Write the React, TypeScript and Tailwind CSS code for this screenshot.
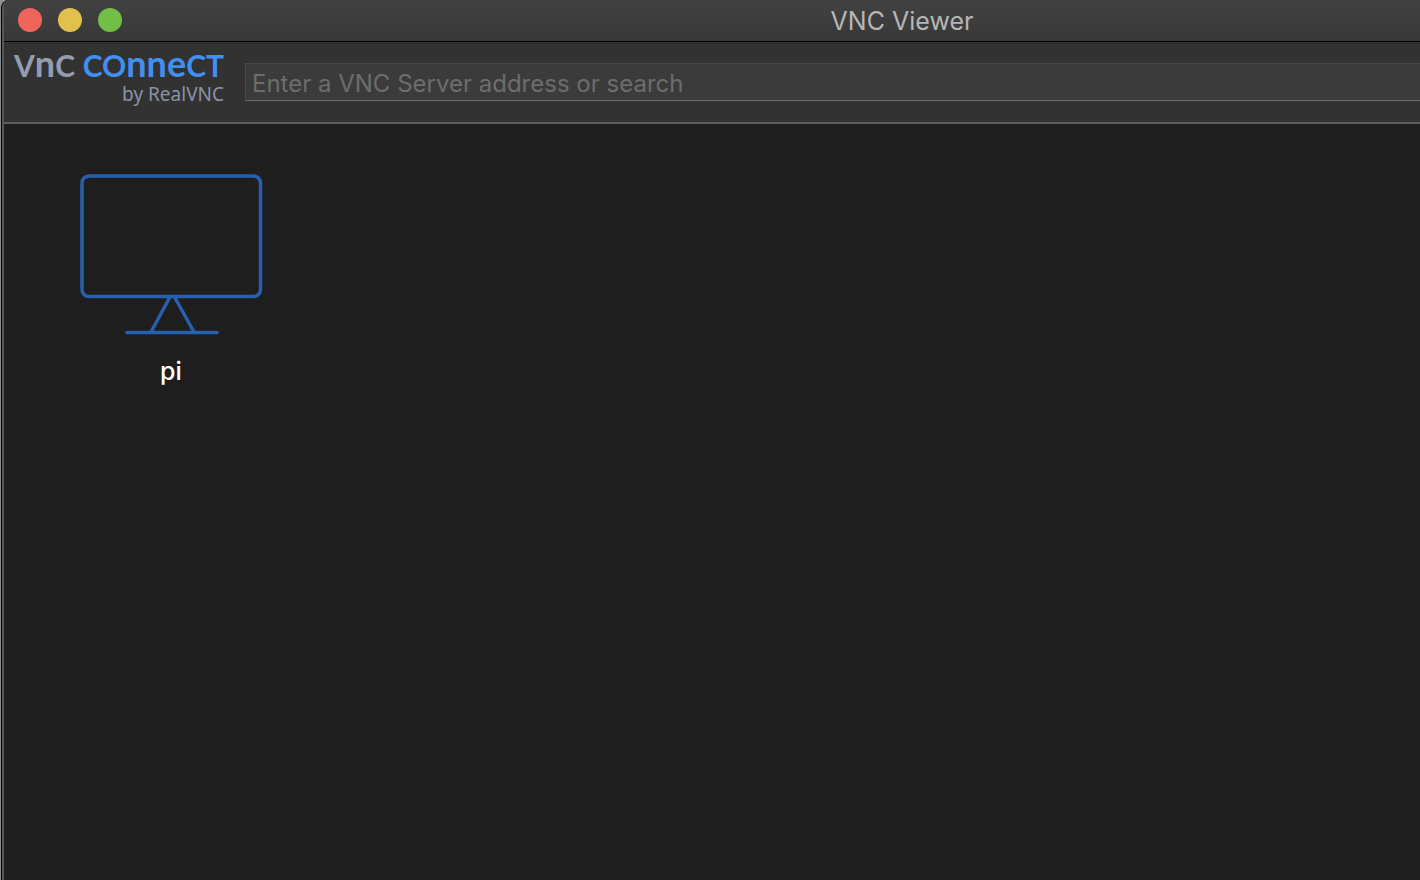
import type { ReactNode } from "react";

const windowButtons = [
  { label: "Close", color: "bg-[#ee665b]" },
  { label: "Minimize", color: "bg-[#e2c04d]" },
  { label: "Zoom", color: "bg-[#72bf48]" },
];

const computers = [{ id: 1, name: "pi" }];

function TitleBar() {
  return (
    <header className="flex h-[42px] items-start border-b border-black bg-linear-to-b from-[#424242] to-[#383838] pt-2 pl-[14px]">
      <div className="flex gap-4">
        {windowButtons.map((button) => (
          <button
            key={button.label}
            type="button"
            aria-label={button.label}
            className={`size-6 rounded-full ${button.color}`}
          />
        ))}
      </div>
      <h1 className="flex-1 pl-[262px] text-center text-[25px] leading-[26px] text-[#b6b6b6]">
        VNC Viewer
      </h1>
    </header>
  );
}

// Capitals are set smaller so that they stand as high as the lowercase letters
function Cap({ children }: { children: ReactNode }) {
  return <span className="text-[30px]">{children}</span>;
}

function Logo() {
  return (
    <div className="flex w-[210px] shrink-0 flex-col items-end">
      <div className="flex w-full items-baseline justify-between font-['Lato',sans-serif] text-[36px] leading-[34px] font-bold">
        <span className="text-[#949db0]">
          <Cap>V</Cap>n<Cap>C</Cap>
        </span>
        <span className="text-[#418ff0]">
          <Cap>CO</Cap>nne<Cap>CT</Cap>
        </span>
      </div>
      <div className="font-['Noto_Sans',sans-serif] text-[19px] leading-6 text-[#8a93a6]">
        by RealVNC
      </div>
    </div>
  );
}

function Toolbar() {
  return (
    <div className="flex h-[82px] items-start border-b-2 border-[#5f5f5f] bg-[#323232] pl-[10px]">
      <div className="pt-1">
        <Logo />
      </div>
      <input
        type="text"
        aria-label="VNC Server address"
        placeholder="Enter a VNC Server address or search"
        className="mt-[21px] ml-[21px] h-[38px] min-w-0 flex-1 border border-r-0 border-[#4a4a4a] border-b-[#6a6a6a] bg-[#3b3b3b] px-[6px] pt-[2px] text-[24px] text-white outline-none placeholder:text-[#6d6d6d]"
      />
    </div>
  );
}

function ComputerIcon() {
  return (
    <svg
      viewBox="0 0 184 162"
      className="h-[162px] w-[184px]"
      fill="none"
      stroke="#2860b0"
      strokeWidth="3.5"
      aria-hidden="true"
    >
      <rect x="3" y="2" width="178.5" height="120.5" rx="7" />
      <path d="M91 123 72 158M95.500 123 115 158" />
      <path d="M48 158.500h90" strokeLinecap="round" />
    </svg>
  );
}

function Computer({ children }: { children: ReactNode }) {
  return (
    <button type="button" className="flex flex-col items-center gap-5">
      <ComputerIcon />
      <span className="text-[25px] leading-[30px] font-medium text-white">
        {children}
      </span>
    </button>
  );
}

export default function App() {
  return (
    <div className="border-l border-[#8a9094] bg-[#8a9094] font-['Inter',sans-serif]">
      <div className="rounded-tl-lg border-l border-black bg-black">
        <div className="flex min-h-screen flex-col overflow-hidden rounded-tl-lg border-l-2 border-[#55585a] bg-[#1e1e1e]">
          <TitleBar />
          <Toolbar />
          <main className="flex flex-1 flex-wrap items-start gap-12 px-[75px] py-[50px]">
            {computers.map((computer) => (
              <Computer key={computer.id}>{computer.name}</Computer>
            ))}
          </main>
        </div>
      </div>
    </div>
  );
}
